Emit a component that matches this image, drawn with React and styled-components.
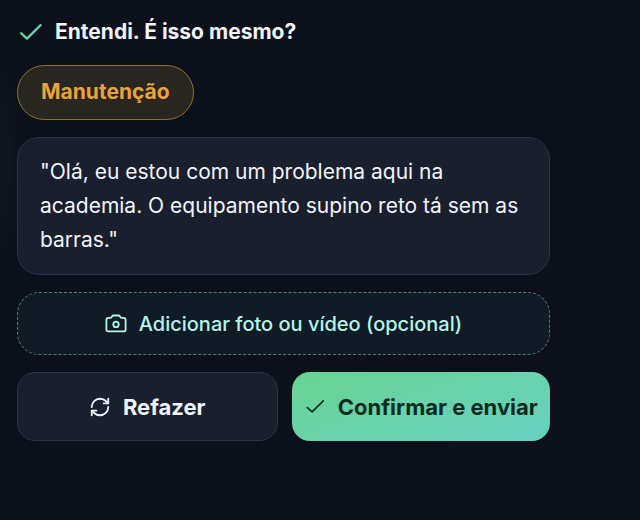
import React from 'react';
import styled, { createGlobalStyle, css } from 'styled-components';
import { RefreshCw } from 'lucide-react';

const GlobalStyle = createGlobalStyle`
  *, *::before, *::after {
    box-sizing: border-box;
  }

  body {
    margin: 0;
    min-height: 100vh;
    background: radial-gradient(ellipse 28px 150px at 0 160px, #0f1922, transparent) #0c101b;
    color: #f1f4fc;
    font-family: Inter, 'Liberation Sans', sans-serif;
  }
`;

const Panel = styled.main`
  display: flex;
  flex-direction: column;
  align-items: stretch;
  gap: 17px;
  padding: 16px 90px 32px 17px;
`;

const Header = styled.header`
  display: flex;
  align-items: center;
  gap: 11px;
`;

const Title = styled.h1`
  margin: 0;
  font-size: 21px;
  font-weight: 700;
  line-height: 32px;
`;

const Category = styled.span`
  align-self: flex-start;
  padding: 11px 23px;
  border: 1px solid #94702f;
  border-radius: 28px;
  background: #292520;
  color: #e8a33c;
  font-size: 21px;
  font-weight: 700;
  line-height: 30px;
  min-height: 55px;
`;

const Transcript = styled.p`
  margin: 0;
  padding: 17px 22px;
  border: 1px solid #2c3446;
  border-radius: 22px;
  background: #1a1f2e;
  font-size: 21px;
  line-height: 34px;
`;

const buttonBase = css`
  display: flex;
  align-items: center;
  justify-content: center;
  gap: 12px;
  font-family: inherit;
  cursor: pointer;
`;

const AttachButton = styled.button`
  ${buttonBase}
  min-height: 63px;
  padding: 0 22px;
  border: 1px dashed #4a8080;
  border-radius: 22px;
  background: #111b25;
  color: #b2f5ea;
  font-size: 20px;
  font-weight: 500;
  line-height: 32px;
`;

const Actions = styled.div`
  display: flex;
  gap: 14px;
`;

const ActionButton = styled.button`
  ${buttonBase}
  flex: 1;
  min-height: 69px;
  padding: 0 10px;
  border: ${props => (props.$primary ? 'none' : '1px solid #2c3446')};
  border-radius: 18px;
  background: ${props =>
    props.$primary ? 'linear-gradient(160deg, #68d391, #6ad2ab 50%, #66d1c1)' : '#1a1f2e'};
  color: ${props => (props.$primary ? '#062c1e' : '#f1f4fc')};
  font-size: 22px;
  font-weight: 700;
  line-height: 32px;
  white-space: nowrap;
`;

const Icon = styled.svg`
  flex: none;
  fill: none;
  stroke: ${props => props.$color || 'currentColor'};
  stroke-linecap: round;
  stroke-linejoin: round;
`;

const CheckIcon = ({ size, color, strokeWidth }) => (
  <Icon
    width={size}
    height={size}
    viewBox="0 0 24 24"
    $color={color}
    strokeWidth={strokeWidth}
    aria-hidden="true"
  >
    <path d="M3.6 12.6L8.8 17.4L21 5.4" />
  </Icon>
);

const CameraIcon = () => (
  <Icon width="22" height="22" viewBox="0 0 22 22" strokeWidth="1.8" aria-hidden="true">
    <path d="M3.4 4.8H5.2Q6.2 4.8 6.7 4L7.2 3.2Q7.6 2.5 8.4 2.5H13.6Q14.4 2.5 14.8 3.2L15.3 4Q15.8 4.8 16.8 4.8H18.6Q20.6 4.8 20.6 6.8V16.4Q20.6 18.4 18.6 18.4H3.4Q1.4 18.4 1.4 16.4V6.8Q1.4 4.8 3.4 4.8Z" />
    <circle cx="11" cy="11.4" r="2.7" />
  </Icon>
);

export default function App() {
  return (
    <>
      <GlobalStyle />
      <Panel>
        <Header>
          <CheckIcon size={27} color="#68d3a0" strokeWidth={2} />
          <Title>Entendi. É isso mesmo?</Title>
        </Header>
        <Category>Manutenção</Category>
        <Transcript>
          "Olá, eu estou com um problema aqui na academia. O equipamento supino reto tá sem as
          barras."
        </Transcript>
        <AttachButton type="button">
          <CameraIcon />
          Adicionar foto ou vídeo (opcional)
        </AttachButton>
        <Actions>
          <ActionButton type="button">
            <RefreshCw size={22} aria-hidden="true" />
            Refazer
          </ActionButton>
          <ActionButton type="button" $primary>
            <CheckIcon size={22} strokeWidth={1.8} />
            Confirmar e enviar
          </ActionButton>
        </Actions>
      </Panel>
    </>
  );
}
